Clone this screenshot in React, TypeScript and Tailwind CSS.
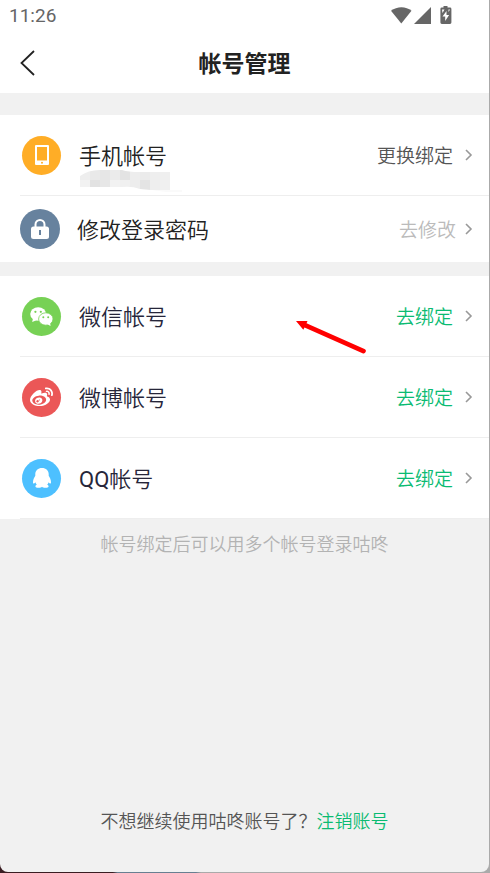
import type { ReactNode } from 'react';
import { FaWeibo } from 'react-icons/fa';

interface AccountRowProps {
  icon: ReactNode;
  iconClass: string;
  label: ReactNode;
  labelClass?: string;
  action: string;
  actionClass: string;
  children?: ReactNode;
}

function Chevron() {
  return (
    <svg className="w-2 h-3 flex-shrink-0" viewBox="0 0 8 12" fill="none" stroke="#999999" strokeWidth="1.6">
      <path d="M1 1l5 5-5 5" />
    </svg>
  );
}

function AccountRow({ icon, iconClass, label, labelClass = 'text-[#26263a]', action, actionClass, children }: AccountRowProps) {
  return (
    <li className="relative">
      <button className="w-full h-20 pl-[22px] pr-4 flex items-center text-left">
        <span className={`w-[39px] h-[39px] rounded-full flex items-center justify-center flex-shrink-0 text-white ${iconClass}`}>
          {icon}
        </span>
        <span className={`ml-[18px] pt-1 flex-1 text-[22px] leading-8 ${labelClass}`}>{label}</span>
        <span className={`mr-3 pt-1 text-[19px] leading-8 ${actionClass}`}>{action}</span>
        <Chevron />
      </button>
      <div className="ml-5 h-px bg-[#eeeeee]" />
      {children}
    </li>
  );
}

function PhoneIcon() {
  return (
    <svg className="w-[14px] h-5" viewBox="0 0 14 20">
      <rect width="14" height="20" rx="1" fill="#ffffff" />
      <rect x="2" y="2" width="10" height="13.5" fill="#ffad26" />
      <circle cx="7" cy="17.8" r="1" fill="#ffad26" />
    </svg>
  );
}

function LockIcon() {
  return (
    <svg className="w-[18px] h-5" viewBox="0 0 18 20">
      <path d="M4.5 8.5V5.5a4.5 4.5 0 0 1 9 0v3" fill="none" stroke="#ffffff" strokeWidth="2" />
      <rect y="7.5" width="18" height="12.5" rx="2.5" fill="#ffffff" />
      <rect x="8" y="11" width="2" height="5" fill="#67829e" />
    </svg>
  );
}

function WechatIcon() {
  return (
    <svg className="w-[23px] h-[19px]" viewBox="0 0 23 19" fill="#ffffff">
      <ellipse cx="8.2" cy="7" rx="8" ry="6.8" />
      <path d="M3 11l-.8 4L7 13z" />
      <circle cx="5.4" cy="4.8" r="1.1" fill="#77d155" />
      <circle cx="10.8" cy="4.8" r="1.1" fill="#77d155" />
      <ellipse cx="15.8" cy="12" rx="7.2" ry="6.2" stroke="#77d155" strokeWidth="0.8" />
      <path d="M17 17l3.6 2-.6-3.5z" />
      <circle cx="13.3" cy="10.2" r="1" fill="#77d155" />
      <circle cx="18.2" cy="10.2" r="1" fill="#77d155" />
    </svg>
  );
}

function QqIcon() {
  return (
    <svg className="w-[18px] h-5" viewBox="0 0 18 20" fill="#ffffff">
      <path d="M9 0C5 0 2.300 2.600 2.300 6.200v1.600C1.100 9.600 0 12 0 14.200c0 1.300.5 1.600 1.100 1.300.5-.2.9-.7 1.200-1.200.3.900.8 1.700 1.500 2.400-.9.400-1.400.9-1.400 1.600 0 1 1.400 1.500 3.300 1.500 1.600 0 2.700-.4 3.300-1 .6.600 1.700 1 3.300 1 1.900 0 3.300-.5 3.300-1.500 0-.7-.5-1.200-1.400-1.600.7-.7 1.200-1.500 1.500-2.400.3.500.7 1 1.200 1.200.6.300 1.100 0 1.100-1.300 0-2.200-1.100-4.600-2.300-6.400V6.200C15.700 2.600 13 0 9 0z" />
    </svg>
  );
}

function StatusIcons() {
  return (
    <svg className="w-[62px] h-5" viewBox="0 0 62 20" fill="#666666">
      <path d="M0 4.8C6 .1 15 .1 20.5 4.800L10.3 17.500z" />
      <path d="M40 1v17H23z" />
      <path d="M52.500 0h4v1.500H59a1.400 1.400 0 0 1 1.400 1.400v13.700A1.400 1.400 0 0 1 59 18h-8.200a1.400 1.400 0 0 1-1.400-1.400V2.900a1.400 1.400 0 0 1 1.400-1.400h1.700z" />
      <path d="M55.500 5l-4 5.600h2.700V15l3.900-5.900h-2.600z" fill="#ffffff" />
      <path d="M51 3.500h2.500L51.500 7zM57.500 3.500H59L57.500 6z" fill="#ffffff" />
    </svg>
  );
}

const maskColors = [
  ['#eeeeee', '#e9e9e9', '#e6e6e6', '#ebebeb', '#e3e3e3', '#ededed', '#ebebeb', '#eeeeee', '#efefef'],
  ['#f2f2f2', '#e2e2e2', '#e7e7e7', '#f2f2f2', '#f0f0f0', '#ededed', '#e4e4e4', '#eeeeee', '#f0f0f0'],
];

function MaskedNumber() {
  return (
    <svg className="absolute left-20 top-[55px] w-[102px] h-6" viewBox="0 0 102 24">
      <clipPath id="mask">
        <path d="M0 6Q8 0 20 0H42Q48 2 60 2H90V20H102V22H86Q74 20 60 19Q52 16 42 17H0z" />
      </clipPath>
      <g clipPath="url(#mask)">
        {maskColors.map((row, y) =>
          row.map((color, x) => <rect key={`${x}-${y}`} x={x * 10} y={y * 10} width="10" height="10" fill={color} />)
        )}
        <path d="M70 20h32v2H70z" fill="#fafafa" />
      </g>
    </svg>
  );
}

function App() {
  return (
    <div className="min-h-screen flex flex-col pr-px pb-px bg-[linear-gradient(to_right,#3a1d22_0,#3a1d22_23%,#687f91_24%,#687f91_40%,#aaaaaa_41%)] font-['Roboto','Noto_Sans_CJK_SC',sans-serif]">
      <div className="flex-1 flex flex-col bg-[#f1f1f1] rounded-b-lg font-[350]">
        <header className="bg-white">
          <div className="h-8 pl-[9px] pr-9 flex items-center justify-between">
            <span className="text-[19px] leading-8 font-normal text-[#666666]">11:26</span>
            <StatusIcons />
          </div>
          <div className="h-[61px] px-5 grid grid-cols-[16px_1fr_16px] items-center">
            <button aria-label="返回">
              <svg className="w-4 h-[26px]" viewBox="0 0 16 26" fill="none" stroke="#222222" strokeWidth="1.8">
                <path d="M14 1L1.5 13 14 25" />
              </svg>
            </button>
            <h1 className="pt-1 text-center text-[23px] leading-8 font-bold text-[#222222]">帐号管理</h1>
          </div>
        </header>

        <ul className="mt-[22px] bg-white">
          <AccountRow
            icon={<PhoneIcon />}
            iconClass="bg-[#ffad26]"
            label="手机帐号"
            labelClass="text-[#222222]"
            action="更换绑定"
            actionClass="text-[#555555]"
          >
            <MaskedNumber />
          </AccountRow>
          <li>
            <button className="w-full h-[66px] pl-5 pr-4 flex items-center text-left">
              <span className="w-10 h-10 rounded-full flex items-center justify-center flex-shrink-0 bg-[#67829e]">
                <LockIcon />
              </span>
              <span className="ml-[17px] pt-1 flex-1 text-[22px] leading-8 text-[#222222]">修改登录密码</span>
              <span className="mr-[9px] pt-1 text-[19px] leading-8 text-[#bbbbbb]">去修改</span>
              <Chevron />
            </button>
          </li>
        </ul>

        <ul className="mt-[14px] bg-white">
          <AccountRow
            icon={<WechatIcon />}
            iconClass="bg-[#77d155]"
            label="微信帐号"
            action="去绑定"
            actionClass="text-[#0abb72]"
          >
            <svg className="absolute left-[296px] top-11 w-[70px] h-[34px]" viewBox="0 0 70 34">
              <path d="M0 1L11.500 1l-1 2.300L68.500 29a2.300 2.300 0 0 1-2 4.200L8.500 7.500l-1.200 2.200z" fill="#ff0000" />
            </svg>
          </AccountRow>
          <AccountRow
            icon={<FaWeibo className="w-[23px] h-[23px]" />}
            iconClass="bg-[#eb5757]"
            label="微博帐号"
            action="去绑定"
            actionClass="text-[#0abb72]"
          />
          <AccountRow
            icon={<QqIcon />}
            iconClass="bg-[#4dc0ff]"
            label={<><span className="font-normal">QQ</span>帐号</>}
            action="去绑定"
            actionClass="text-[#0abb72]"
          />
        </ul>

        <p className="mt-[10px] text-center text-lg leading-8 text-[#b3b3b3]">帐号绑定后可以用多个帐号登录咕咚</p>

        <p className="mt-auto pb-[34px] text-center text-lg leading-8 text-[#555555]">
          不想继续使用咕咚账号了？<a href="#" className="text-[#0abb72]">注销账号</a>
        </p>
      </div>
    </div>
  );
}

export default App;
